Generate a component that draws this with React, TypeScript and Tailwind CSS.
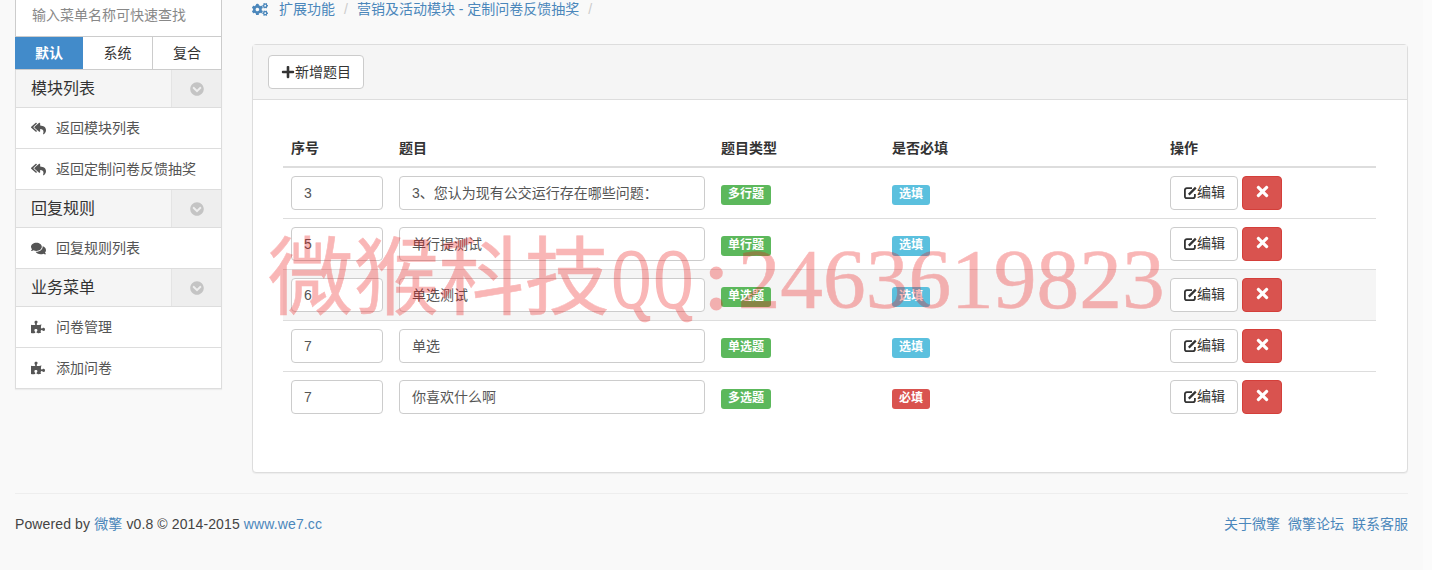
import { FaChevronCircleDown, FaCogs, FaComments, FaPlus, FaPuzzlePiece, FaReplyAll, FaTimes } from "react-icons/fa";

const rows = [
  { no: "3", title: "3、您认为现有公交运行存在哪些问题：", type: "多行题", required: false },
  { no: "5", title: "单行提测试", type: "单行题", required: false },
  { no: "6", title: "单选测试", type: "单选题", required: false, hover: true },
  { no: "7", title: "单选", type: "单选题", required: false },
  { no: "7", title: "你喜欢什么啊", type: "多选题", required: true },
];

function EditIcon() {
  return (
    <svg width="14" height="14" viewBox="0 0 14 14" fill="none" stroke="currentColor" className="shrink-0">
      <path d="M9 2.2H3.8a1.9 1.9 0 0 0-1.9 1.9v6.2a1.9 1.9 0 0 0 1.9 1.9h6.2a1.9 1.9 0 0 0 1.9-1.9V8" strokeWidth="1.8" />
      <path d="M5.8 8.6 12.8 1.6" strokeWidth="2.2" />
    </svg>
  );
}

function GroupHead({ title }: { title: string }) {
  return (
    <div className="flex h-[38px] border-b border-[#ddd] bg-[#f5f5f5]">
      <div className="flex-1 pl-[15px] text-base leading-[37px] text-[#333]">{title}</div>
      <div className="flex w-[50px] items-center justify-center border-l border-[#e4e4e4] bg-[#eee]">
        <FaChevronCircleDown className="text-[14px] text-[#c4c4c4]" />
      </div>
    </div>
  );
}

function NavItem({ icon, label }: { icon: React.ReactNode; label: string }) {
  return (
    <div className="flex h-[41px] items-center border-b border-[#ddd] bg-white pl-[15px] text-[14px] text-[#555] last:h-[40px] last:border-b-0">
      <span className="flex w-[25px] text-[#555]">{icon}</span>
      <span>{label}</span>
    </div>
  );
}

export default function App() {
  return (
    <div className="relative h-[570px] w-[1432px] overflow-hidden bg-[#f9f9f9] font-['Liberation_Sans','Noto_Sans_CJK_SC',sans-serif] text-[14px] text-[#333]">
      <div className="flex w-[1423px] items-start gap-[30px] pl-[15px] pr-[15px]">
        <aside className="w-[207px] shrink-0">
          <div className="h-[37px] border border-t-0 border-[#ccc] bg-white pl-4 text-[14px] leading-[31px] text-[#888]">
            输入菜单名称可快速查找
          </div>
          <div className="flex h-[33px] border-r border-b border-[#ccc] bg-white text-[14px] leading-[32px]">
            <div className="w-[68px] bg-[#428bca] text-center font-bold text-white">默认</div>
            <div className="w-[70px] border-r border-[#ccc] text-center">系统</div>
            <div className="flex-1 text-center">复合</div>
          </div>
          <div className="border-x border-b border-[#ddd] shadow-[0_1px_1px_rgba(0,0,0,0.05)]">
            <GroupHead title="模块列表" />
            <NavItem icon={<FaReplyAll className="text-[15px]" />} label="返回模块列表" />
            <NavItem icon={<FaReplyAll className="text-[15px]" />} label="返回定制问卷反馈抽奖" />
            <GroupHead title="回复规则" />
            <NavItem icon={<FaComments className="text-[15px]" />} label="回复规则列表" />
            <GroupHead title="业务菜单" />
            <NavItem icon={<FaPuzzlePiece className="text-[14px]" />} label="问卷管理" />
            <NavItem icon={<FaPuzzlePiece className="text-[14px]" />} label="添加问卷" />
          </div>
        </aside>

        <main className="w-[1156px] shrink-0">
          <div className="flex h-[44px] items-start pt-[1px] text-[14px] leading-[16px] text-[#4b87bb]">
            <FaCogs className="mt-[0.5px] mr-[11px] h-[15px] w-[16px]" />
            <span>扩展功能</span>
            <span className="mx-[9px] text-[#ccc]">/</span>
            <span>营销及活动模块 - 定制问卷反馈抽奖</span>
            <span className="mx-[9px] text-[#ccc]">/</span>
          </div>

          <div className="h-[429px] rounded-[4px] border border-[#ddd] bg-white shadow-[0_1px_1px_rgba(0,0,0,0.05)]">
            <div className="h-[55px] border-b border-[#ddd] bg-[#f5f5f5] px-[15px] pt-[10px]">
              <button className="flex h-[34px] w-[96px] items-center justify-center rounded-[4px] border border-[#ccc] bg-white text-[14px] text-[#333]">
                <FaPlus className="text-[14px]" />
                新增题目
              </button>
            </div>
            <div className="px-[30px] pt-[30px]">
              <table className="w-[1093px] table-fixed border-collapse text-[14px]">
                <thead>
                  <tr className="h-[37px] border-b-2 border-[#ddd] text-left font-bold">
                    <th className="w-[108px] pl-2 font-bold">序号</th>
                    <th className="w-[322px] pl-2 font-bold">题目</th>
                    <th className="w-[171px] pl-2 font-bold">题目类型</th>
                    <th className="w-[278px] pl-2 font-bold">是否必填</th>
                    <th className="pl-2 font-bold">操作</th>
                  </tr>
                </thead>
                <tbody>
                  {rows.map((r, i) => (
                    <tr key={i} className={`h-[51px] border-b border-[#ddd] last:border-b-0 ${r.hover ? "bg-[#f5f5f5]" : ""}`}>
                      <td className="pl-2">
                        <div className="h-[34px] w-[92px] rounded-[4px] border border-[#ccc] bg-white pl-3 text-[14px] leading-[32px] text-[#555]">{r.no}</div>
                      </td>
                      <td className="pl-2">
                        <div className="h-[34px] w-[306px] rounded-[4px] border border-[#ccc] bg-white pl-3 text-[14px] leading-[32px] text-[#555]">{r.title}</div>
                      </td>
                      <td className="pt-[4px] pl-2">
                        <span className="inline-block h-[20px] w-[50px] rounded-[3px] bg-[#5cb85c] text-center align-middle text-[12px] leading-[18px] font-bold text-white">{r.type}</span>
                      </td>
                      <td className="pt-[4px] pl-2">
                        <span className={`inline-block h-[20px] w-[38px] rounded-[3px] text-center align-middle text-[12px] leading-[18px] font-bold text-white ${r.required ? "bg-[#d9534f]" : "bg-[#5bc0de]"}`}>
                          {r.required ? "必填" : "选填"}
                        </span>
                      </td>
                      <td className="pl-2">
                        <div className="flex gap-1">
                          <button className="flex h-[34px] w-[68px] items-center justify-center rounded-[4px] border border-[#ccc] bg-white text-[14px] text-[#333]">
                            <EditIcon />
                            编辑
                          </button>
                          <button className="flex h-[34px] w-[40px] items-center justify-center rounded-[4px] border border-[#d43f3a] bg-[#d9534f] pb-[2px] text-white">
                            <FaTimes className="text-[17px]" />
                          </button>
                        </div>
                      </td>
                    </tr>
                  ))}
                </tbody>
              </table>
            </div>
          </div>
        </main>
      </div>

      <footer className="mx-[15px] mt-5 flex w-[1393px] justify-between border-t border-[#eee] pt-[20px] text-[14px] leading-5 text-[#444]">
        <div className="tracking-[0.12px]">
          Powered by <span className="text-[#4b87bb]">微擎</span> v0.8 © 2014-2015 <span className="text-[#4b87bb]">www.we7.cc</span>
        </div>
        <div className="flex gap-2 text-[14px] text-[#4b87bb]">
          <span>关于微擎</span>
          <span>微擎论坛</span>
          <span>联系客服</span>
        </div>
      </footer>

      <div className="absolute top-0 right-0 h-full w-[9px] bg-[#fbfbfb]" />

      {/* watermark: half-width latin like the original song face */}
      <div className="pointer-events-none absolute top-[229px] left-[268px] font-['Liberation_Serif','Noto_Sans_CJK_SC',serif] text-[85.4px] leading-[100px] whitespace-nowrap text-[#ee1111] opacity-30 [-webkit-text-stroke:0.6px_#ee1111]">
        <span>微猴科技</span>
        <span className="inline-flex w-[42.7px] scale-x-[0.62] justify-center [-webkit-text-stroke:2px_#ee1111]">Q</span>
        <span className="inline-flex w-[42.7px] scale-x-[0.62] justify-center [-webkit-text-stroke:2px_#ee1111]">Q</span>
        <span className="inline-block w-[42.7px] text-center [-webkit-text-stroke:3px_#ee1111]">:</span>
        <span>2463619823</span>
      </div>
    </div>
  );
}
